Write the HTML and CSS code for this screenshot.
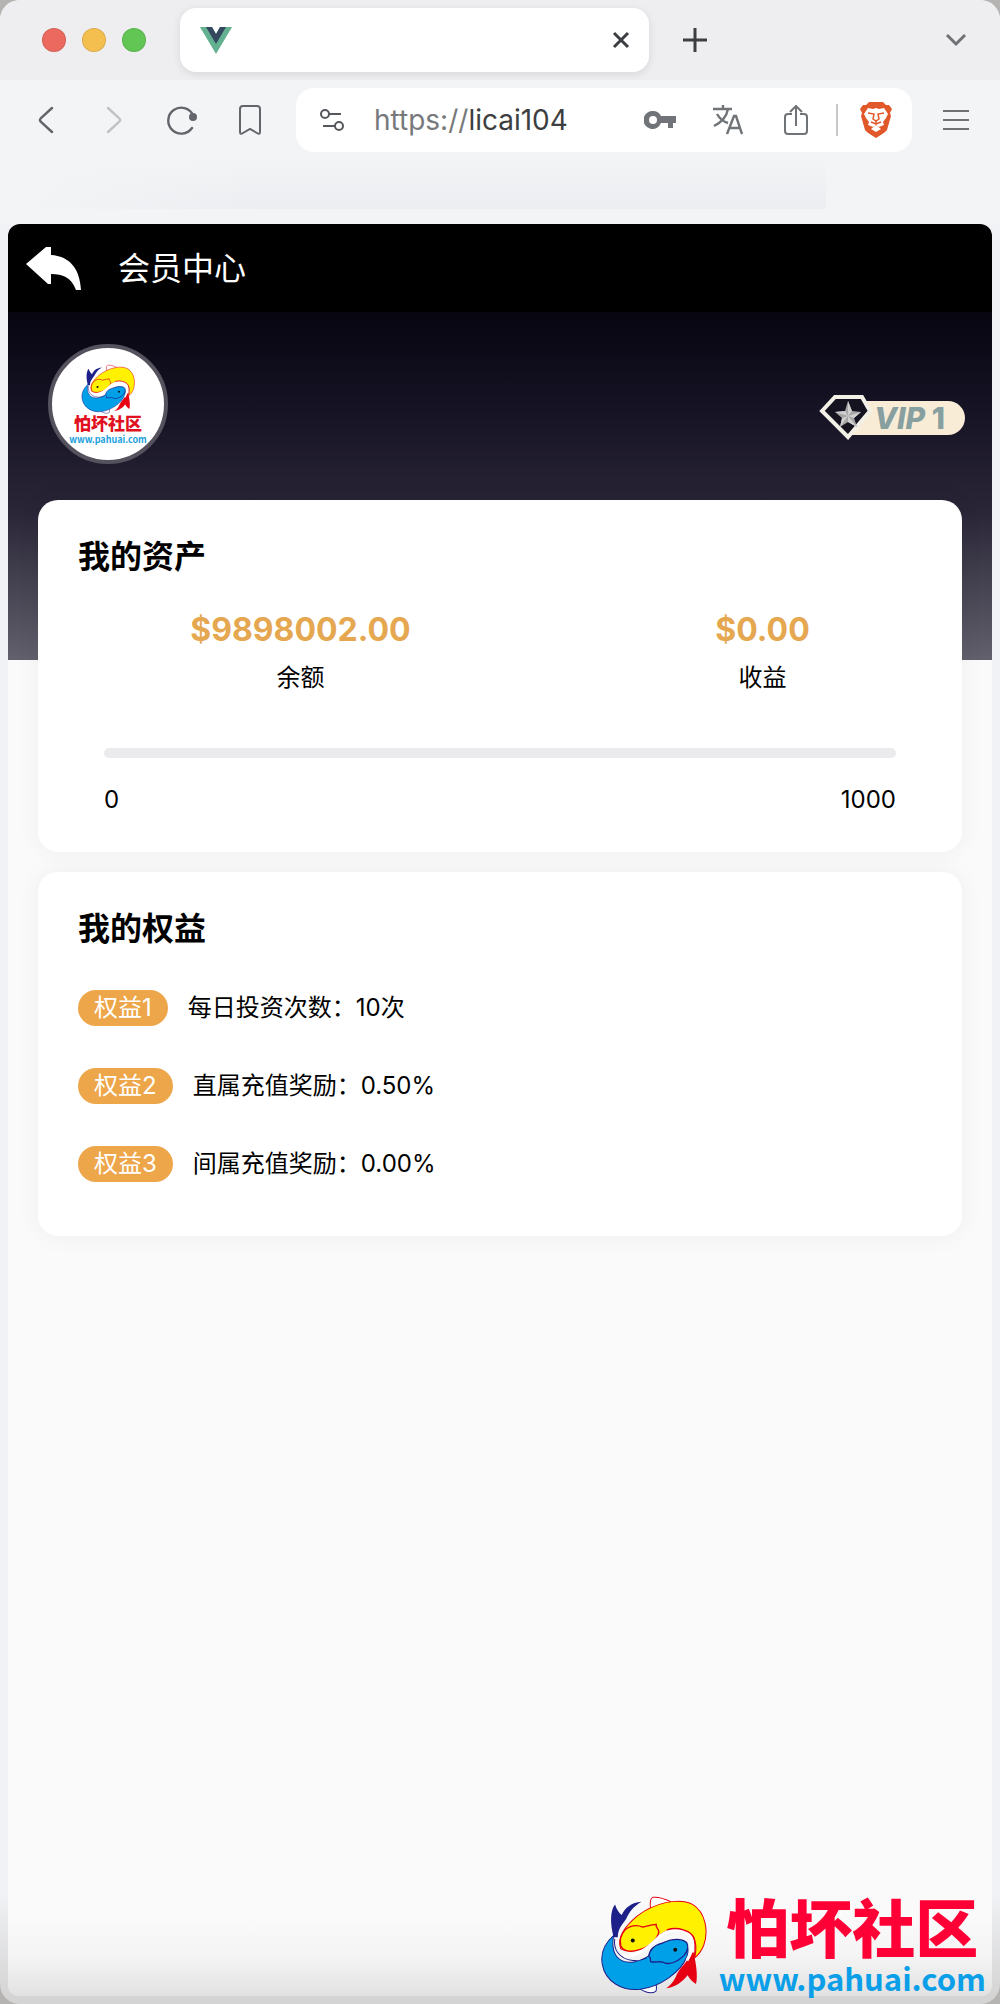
FILE: index.html
```html
<!DOCTYPE html>
<html lang="zh-CN">
<head>
  <meta charset="UTF-8" />
  <meta name="viewport" content="width=device-width, initial-scale=1" />
  <title>会员中心</title>
  <link rel="stylesheet" href="styles.css">
</head>
<body>

<!-- two fish logo, used by the avatar and the watermark -->
<svg class="sprite" aria-hidden="true">
  <symbol id="fish" viewBox="50 44 320 296">
    <path d="M202 88C198 66 200 54 208 51C225 48 245 56 262 64" fill="#fff" stroke="#e60012" stroke-width="3"/>
    <path d="M168 324C185 335 205 340 217 332C221 320 218 308 213 298" fill="#fff" stroke="#1d2088" stroke-width="3"/>
    <path d="M91 170C80 130 80 90 95 72C100 88 108 98 115 104C124 82 145 66 174 64C150 78 138 94 130 112C120 130 104 140 103 170Z" fill="#1d2088"/>
    <path d="M330 215C336 245 344 285 337 310C325 303 318 294 312 284C296 304 275 320 248 323C266 311 274 296 281 279C292 258 314 244 318 220Z" fill="#e60012"/>
    <path d="M91 165C68 185 50 215 57 252C66 302 115 332 170 326C230 318 292 275 310 228C318 203 312 188 285 181C260 178 240 188 220 204C180 248 125 258 100 228C88 212 86 190 91 165Z" fill="#00a0e9" stroke="#1d2088" stroke-width="3"/>
    <path d="M112 205C100 172 122 140 160 108C210 68 285 50 327 72C365 96 376 150 360 195C352 215 342 225 333 232C343 194 333 164 310 152C270 137 238 152 215 175C190 204 140 222 112 205Z" fill="#fff100" stroke="#e60012" stroke-width="3"/>
    <path d="M125 148C145 132 160 132 178 140C195 136 206 132 218 132C215 140 225 144 226 154C220 180 195 202 165 208C142 216 118 213 112 195C108 178 113 162 125 148Z" fill="#fff100" stroke="#e60012" stroke-width="4"/>
    <path d="M196 227C198 205 215 193 238 187C264 176 292 173 309 186C316 198 312 212 300 226C284 241 265 252 246 248C232 239 222 246 202 244C198 238 206 234 196 227Z" fill="#00a0e9" stroke="#1d2088" stroke-width="4"/>
    <path d="M105 225C155 235 195 203 230 166C260 143 304 141 322 170C329 190 325 215 310 240" fill="none" stroke="#fff" stroke-width="9"/>
    <path d="M94 175C90 205 105 235 148 240C165 241 178 238 190 232" fill="none" stroke="#1d2088" stroke-width="3"/>
    <path d="M250 148C282 138 322 150 331 172C338 194 334 212 332 230" fill="none" stroke="#e60012" stroke-width="4"/>
    <circle cx="148" cy="180" r="6" fill="#111"/>
    <circle cx="275" cy="208" r="6" fill="#111"/>
  </symbol>
</svg>

<div class="window">

  <div class="tab-strip">
    <div class="lights">
      <button class="light red" aria-label="关闭"></button>
      <button class="light yellow" aria-label="最小化"></button>
      <button class="light green" aria-label="缩放"></button>
    </div>
    <div class="tab">
      <svg width="32" height="27" viewBox="0 0 32 27" aria-hidden="true">
        <path d="M0 0H12L16 7L20 0H32L16 27Z" fill="#64b192"/>
        <path d="M6 0H12L16 7L20 0H26L16 17Z" fill="#35495e"/>
      </svg>
      <button class="icon-btn tab-close" aria-label="关闭标签页">
        <svg width="18" height="18" viewBox="0 0 18 18"><path d="M2 2L16 16M16 2L2 16" stroke="#3c3e41" stroke-width="3"/></svg>
      </button>
    </div>
    <button class="icon-btn new-tab" aria-label="新标签页">
      <svg width="24" height="24" viewBox="0 0 24 24"><path d="M12 0V24M0 12H24" stroke="#3c3e41" stroke-width="3"/></svg>
    </button>
    <button class="icon-btn tab-list" aria-label="搜索标签页">
      <svg width="22" height="14" viewBox="0 0 22 14"><path d="M2 2L11 11L20 2" fill="none" stroke="#6f7174" stroke-width="3"/></svg>
    </button>
  </div>

  <div class="toolbar">
    <button class="icon-btn" aria-label="后退">
      <svg width="16" height="28" viewBox="0 0 16 28"><path d="M14 2L3 12Q1 14 3 16L14 26" fill="none" stroke="#626569" stroke-width="2.4" stroke-linecap="round"/></svg>
    </button>
    <button class="icon-btn" aria-label="前进" disabled>
      <svg width="16" height="28" viewBox="0 0 16 28"><path d="M2 2L13 12Q15 14 13 16L2 26" fill="none" stroke="#c0c2c5" stroke-width="2.4" stroke-linecap="round"/></svg>
    </button>
    <button class="icon-btn" aria-label="刷新">
      <svg width="32" height="30" viewBox="0 0 32 30"><path d="M26 23A13 13 0 1 1 27 10" fill="none" stroke="#626569" stroke-width="2.4" stroke-linecap="round"/><circle cx="27" cy="12" r="4" fill="#626569"/></svg>
    </button>
    <button class="icon-btn" aria-label="书签">
      <svg width="22" height="30" viewBox="0 0 22 30"><path d="M4 1H18Q21 1 21 4V27Q21 30 18 28L11 24L4 28Q1 30 1 27V4Q1 1 4 1Z" fill="none" stroke="#626569" stroke-width="2"/></svg>
    </button>
    <div class="address">
      <svg class="tune" width="24" height="24" viewBox="0 0 24 24" fill="none" stroke="#55585b" stroke-width="2" aria-hidden="true"><circle cx="5" cy="6" r="4"/><path d="M9 6H21M3 18H15"/><circle cx="19" cy="18" r="4"/></svg>
      <label for="url">https://</label>
      <input id="url" type="text" value="licai104">
      <button class="icon-btn" aria-label="密码">
        <svg width="32" height="18" viewBox="0 0 32 18"><path d="M9 0A9 9 0 1 0 17 12H24V17H29V12H32V5H17A9 9 0 0 0 9 0ZM9 5A4 4 0 1 1 9 13A4 4 0 0 1 9 5Z" fill="#707377" fill-rule="evenodd"/></svg>
      </button>
      <button class="icon-btn" aria-label="翻译">
        <svg width="30" height="30" viewBox="0 0 30 30" fill="none" stroke="#707377" stroke-width="2.4"><path d="M0 4H19M10 0V4M4 9Q8 16 15 18M15 4Q13 15 1 21M14 29L21 11H23L29 29M17 23H27"/></svg>
      </button>
      <button class="icon-btn" aria-label="分享">
        <svg width="24" height="30" viewBox="0 0 24 30" fill="none" stroke="#707377" stroke-width="2"><path d="M8 9H4Q1 9 1 12V26Q1 29 4 29H20Q23 29 23 26V12Q23 9 20 9H16M12 21V2M6 7L12 1L18 7"/></svg>
      </button>
      <span class="divider"></span>
      <button class="icon-btn" aria-label="Brave Shields">
        <svg width="32" height="36" viewBox="0 0 32 36"><path d="M9 0H23L26 3L29 3L32 7L30 11L31 14L27 28Q26 30 16 36Q6 30 5 28L1 14L2 11L0 7L3 3L6 3Z" fill="#e1592b"/><path d="M8 6L13 7L16 6L19 7L24 6L28 12L26 16L23 20L24 23L19 25L16 23L13 25L8 23L9 20L6 16L4 12Z" fill="#fff"/><path d="M8 11L14 12L13 17L16 19L19 17L18 12L24 11M16 19V23M11 20L16 22L21 20" fill="none" stroke="#e1592b" stroke-width="1.5"/><path d="M11 27L16 23L21 27L16 30Z" fill="#fff"/></svg>
      </button>
    </div>
    <button class="icon-btn menu" aria-label="菜单">
      <svg width="26" height="22" viewBox="0 0 26 22"><path d="M0 2H26M0 11H26M0 20H26" stroke="#6f7174" stroke-width="2"/></svg>
    </button>
  </div>

  <div class="bookmarks"><div class="smudge"></div></div>

  <main class="page">
    <header class="nav">
      <a href="#" class="back" aria-label="返回">
        <svg width="57" height="45" viewBox="0 0 57 45"><path d="M1 18L21 1H26V9C44 10 55 22 56 44H51C46 31 38 28 26 28V38H23Z" fill="#fff"/></svg>
      </a>
      <h1>会员中心</h1>
    </header>

    <section class="hero">
      <div class="avatar">
        <svg class="avatar-fish" aria-hidden="true"><use href="#fish"/></svg>
        <span class="avatar-name">怕坏社区</span>
        <span class="avatar-site">www.pahuai.com</span>
      </div>
      <div class="vip">
        <svg width="54" height="46" viewBox="0 0 54 46" aria-hidden="true">
          <path d="M3 16L16 2H43L51 16L29 42Z" fill="#161321" stroke="#f3f0e8" stroke-width="4"/>
          <path d="M29 6L33 16L42 17L35 23L38 32L29 27L21 32L23 23L16 17L26 16Z" fill="#a6a6a6"/>
          <path d="M29 6V21L33 16ZM42 17L29 21L35 23ZM38 32L29 21V27ZM21 32L29 21L23 23ZM16 17L29 21L26 16Z" fill="#cfcfcf"/>
        </svg>
        <span class="vip-text"><i>VIP</i> 1</span>
      </div>
    </section>

    <div class="cards">
      <section class="card">
        <h2>我的资产</h2>
        <div class="stats">
          <div class="stat"><strong>$9898002.00</strong><span>余额</span></div>
          <div class="stat"><strong>$0.00</strong><span>收益</span></div>
        </div>
        <div class="level">
          <progress value="0" max="1000" aria-label="等级进度"></progress>
          <div class="range"><span>0</span><span>1000</span></div>
        </div>
      </section>

      <section class="card">
        <h2>我的权益</h2>
        <ul class="perks">
          <li><span class="tag">权益1</span>每日投资次数：10次</li>
          <li><span class="tag">权益2</span>直属充值奖励：0.50%</li>
          <li><span class="tag">权益3</span>间属充值奖励：0.00%</li>
        </ul>
      </section>
    </div>
  </main>

  <div class="watermark">
    <svg class="watermark-fish" aria-hidden="true"><use href="#fish"/></svg>
    <div class="watermark-text">
      <span class="watermark-name">怕坏社区</span>
      <span class="watermark-site">www.pahuai.com</span>
    </div>
  </div>
</div>

</body>
</html>
```
FILE: styles.css
```css
* {
  box-sizing: border-box;
}
body {
  margin: 0;
  background: #b5b4b2;
  font-family: Inter, "Noto Sans CJK SC", sans-serif;
  font-size: 24px;
  color: #000;
}
.sprite {
  position: absolute;
  width: 0;
  height: 0;
}
.window {
  position: relative;
  display: flex;
  flex-direction: column;
  min-height: 100vh;
  padding-bottom: 8px;
  border-radius: 20px;
  overflow: hidden;
  background: linear-gradient(to top, #d4d4d4 8px, #f1f2f5 110px);
}

/* browser chrome */
.icon-btn {
  display: flex;
  align-items: center;
  justify-content: center;
  flex: none;
  width: 68px;
  height: 64px;
  padding: 0;
  border: 0;
  background: none;
}
.tab-strip {
  display: flex;
  align-items: center;
  height: 80px;
  padding-left: 42px;
  background: #eeeef0;
}
.lights {
  display: flex;
  gap: 16px;
  margin-right: 34px;
}
.light {
  width: 24px;
  height: 24px;
  padding: 0;
  border: 1px solid rgba(0, 0, 0, 0.1);
  border-radius: 50%;
}
.red {
  background: #ec695f;
}
.yellow {
  background: #f5bf50;
}
.green {
  background: #62c654;
}
.tab {
  display: flex;
  align-items: center;
  justify-content: space-between;
  width: 49%;
  height: 64px;
  padding-left: 20px;
  border-radius: 16px;
  background: #fff;
  box-shadow: 0 2px 8px rgba(0, 0, 0, 0.1);
}
.tab-close {
  width: 56px;
}
.new-tab {
  margin-left: 12px;
}
.tab-list {
  width: 88px;
  margin-left: auto;
}
.toolbar {
  display: flex;
  align-items: center;
  height: 80px;
  padding-left: 12px;
  background: #f3f4f6;
}
.address {
  display: flex;
  align-items: center;
  flex: 1;
  min-width: 0;
  height: 64px;
  margin-left: 12px;
  padding: 0 2px 0 24px;
  border-radius: 18px;
  background: #fff;
  font-size: 28px;
}
.tune {
  flex: none;
  margin-right: 30px;
}
.address label {
  color: #77797c;
}
.address input {
  flex: 1;
  min-width: 0;
  padding: 0;
  border: 0;
  outline: 0;
  background: none;
  font: inherit;
  color: #3c3e41;
}
.divider {
  width: 2px;
  height: 32px;
  margin: 0 4px 0 6px;
  background: #c6c8ca;
}
.menu {
  width: 88px;
}
.bookmarks {
  height: 64px;
  padding: 0 174px 0 24px;
  background: #f3f4f6;
}
.smudge {
  height: 49px;
  background: linear-gradient(to right, #f3f4f6, rgba(243, 244, 246, 0) 30%), linear-gradient(#f3f4f6, #ecedf0);
}

/* page */
.page {
  display: flex;
  flex-direction: column;
  flex: 1;
  margin: 0 8px;
  border-radius: 12px 12px 10px 10px;
  overflow: hidden;
  background: linear-gradient(to top, #e2e2e2, #f4f4f4 40px, #fafafa 80px);
}
.nav {
  display: flex;
  align-items: center;
  gap: 36px;
  height: 88px;
  padding-left: 17px;
  background: #000;
  color: #fff;
}
.back {
  display: flex;
}
.nav h1 {
  margin: 0;
  padding-bottom: 4px;
  font-size: 32px;
  font-weight: 400;
}
.hero {
  display: flex;
  align-items: flex-start;
  justify-content: space-between;
  height: 348px;
  padding: 32px 27px 0 40px;
  background: linear-gradient(#070510, #161325 28%, #2a2638 58%, #62606c);
}
.avatar {
  display: flex;
  flex-direction: column;
  align-items: center;
  width: 120px;
  height: 120px;
  padding-top: 16px;
  border: 4px solid #55525e;
  border-radius: 50%;
  background: #fff;
}
.avatar-fish {
  width: 54px;
  height: 50px;
}
.avatar-name {
  font-size: 17px;
  line-height: 20px;
  font-weight: 900;
  color: #e01020;
}
.avatar-site {
  font-family: "Noto Sans CJK SC", sans-serif;
  font-size: 9px;
  line-height: 12px;
  font-weight: 700;
  color: #1a9fdc;
}
.vip {
  display: flex;
  align-items: center;
  margin-top: 51px;
}
.vip svg {
  position: relative;
  z-index: 1;
}
.vip-text {
  margin-left: -22px;
  padding: 0 20px 0 23px;
  border-radius: 0 18px 18px 0;
  background: #f8ecd6;
  font-size: 30px;
  line-height: 34px;
  font-weight: 800;
  color: #87a09f;
}
.cards {
  display: flex;
  flex-direction: column;
  gap: 20px;
  margin-top: -160px;
  padding: 0 30px;
}
.card {
  padding-bottom: 34px;
  border-radius: 20px;
  background: #fff;
  box-shadow: 0 0 24px rgba(0, 0, 0, 0.05);
}
.card h2 {
  margin: 0;
  padding: 32px 40px 0;
  font-size: 32px;
  line-height: 50px;
}
.stats {
  display: flex;
  justify-content: space-around;
  margin-top: 30px;
}
.stat {
  display: flex;
  flex-direction: column;
  align-items: center;
  gap: 12px;
  line-height: 36px;
}
.stat strong {
  font-size: 32px;
  color: #e5a750;
}
.level {
  padding: 0 66px;
}
.level progress {
  display: block;
  width: 100%;
  height: 10px;
  margin-top: 52px;
  border: 0;
  border-radius: 5px;
  overflow: hidden;
  appearance: none;
}
.level progress::-webkit-progress-bar {
  background: #ebebed;
}
.level progress::-webkit-progress-value {
  background: #eda649;
}
.range {
  display: flex;
  justify-content: space-between;
  margin-top: 24px;
  line-height: 36px;
}
.perks {
  display: flex;
  flex-direction: column;
  gap: 42px;
  margin: 0;
  padding: 36px 40px 20px;
  list-style: none;
}
.perks li {
  display: flex;
  align-items: center;
  gap: 20px;
  line-height: 36px;
}
.tag {
  padding: 0 16px;
  border-radius: 18px;
  background: #eda649;
  color: #fff;
}

/* site logo over the bottom corner */
.watermark {
  position: absolute;
  right: 14px;
  bottom: 10px;
  display: flex;
  align-items: center;
  gap: 12px;
}
.watermark-fish {
  width: 107px;
  height: 99px;
}
.watermark-text {
  display: flex;
  flex-direction: column;
  align-items: center;
}
.watermark-name {
  font-size: 63px;
  line-height: 66px;
  font-weight: 900;
  color: #ff0036;
}
.watermark-site {
  font-family: "Noto Sans CJK SC", sans-serif;
  font-size: 31px;
  line-height: 32px;
  font-weight: 700;
  color: #0a9fe8;
}
```
